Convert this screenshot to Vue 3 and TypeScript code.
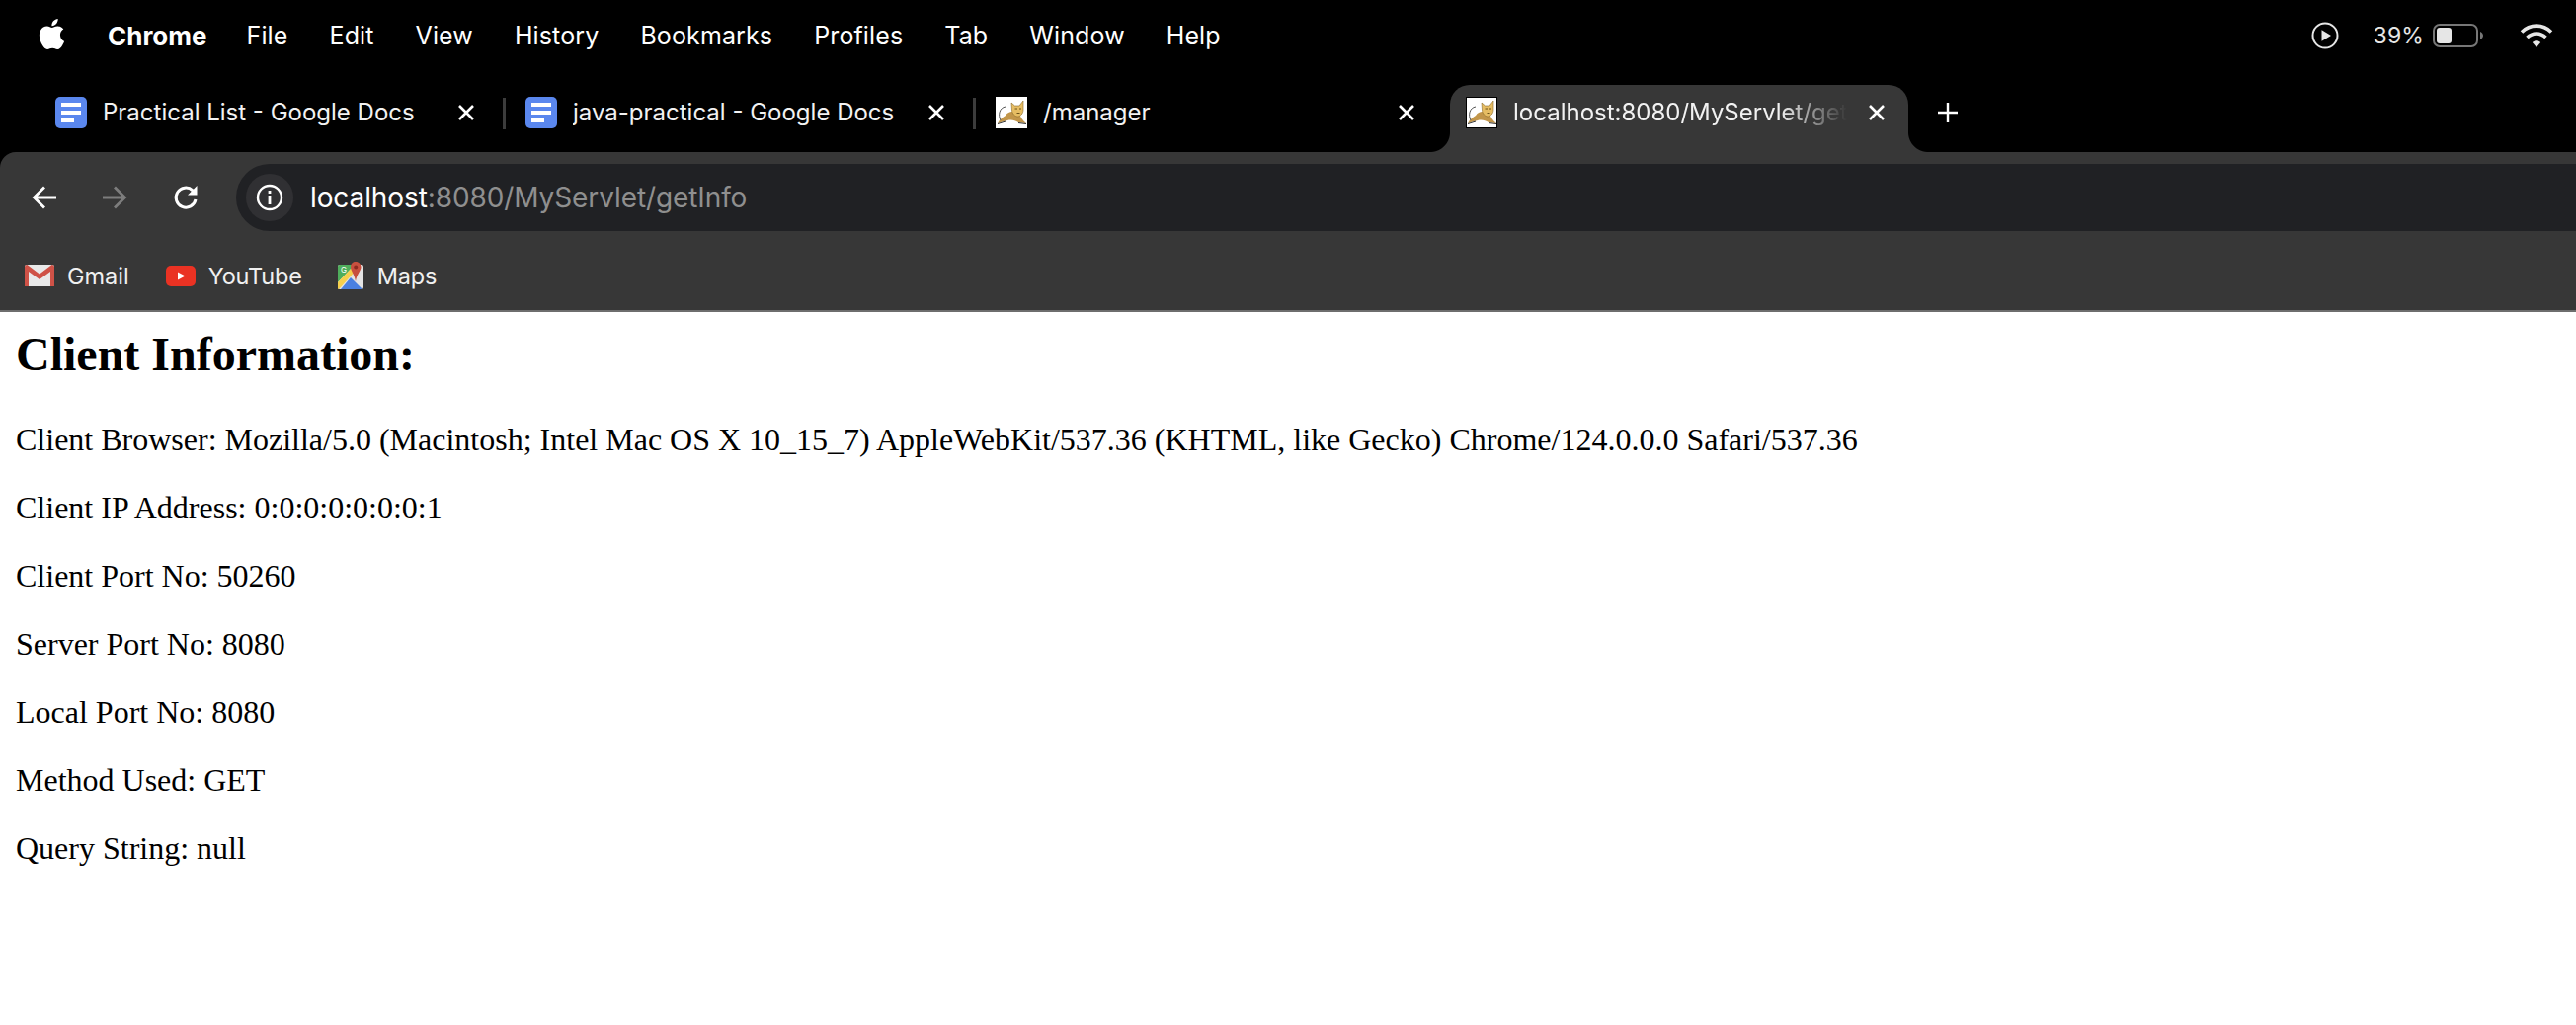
<script setup lang="ts">
const menus: string[] = ['File', 'Edit', 'View', 'History', 'Bookmarks', 'Profiles', 'Tab', 'Window', 'Help']
const lines: string[] = [
  'Client Browser: Mozilla/5.0 (Macintosh; Intel Mac OS X 10_15_7) AppleWebKit/537.36 (KHTML, like Gecko) Chrome/124.0.0.0 Safari/537.36',
  'Client IP Address: 0:0:0:0:0:0:0:1',
  'Client Port No: 50260',
  'Server Port No: 8080',
  'Local Port No: 8080',
  'Method Used: GET',
  'Query String: null',
]
interface Tab { title: string; icon: 'docs' | 'cat'; active?: boolean; sep?: boolean }
const tabs: Tab[] = [
  { title: 'Practical List - Google Docs', icon: 'docs', sep: true },
  { title: 'java-practical - Google Docs', icon: 'docs', sep: true },
  { title: '/manager', icon: 'cat' },
  { title: 'localhost:8080/MyServlet/getInfo', icon: 'cat', active: true },
]
</script>

<template>
  <div class="screen">
    <header class="chrome">
      <div class="menubar">
        <svg class="apple" viewBox="0 0 24 24" width="31" height="31" fill="#fff">
          <path d="M12.152 6.896c-.948 0-2.415-1.078-3.96-1.04-2.04.027-3.91 1.183-4.961 3.014-2.117 3.675-.546 9.103 1.519 12.09 1.013 1.454 2.208 3.09 3.792 3.039 1.52-.065 2.09-.987 3.935-.987 1.831 0 2.35.987 3.96.948 1.637-.026 2.676-1.48 3.676-2.948 1.156-1.688 1.636-3.325 1.662-3.415-.039-.013-3.182-1.221-3.22-4.857-.026-3.04 2.48-4.494 2.597-4.559-1.429-2.09-3.623-2.324-4.39-2.376-2-.156-3.675 1.09-4.61 1.09zM15.53 3.83c.843-1.012 1.4-2.427 1.245-3.83-1.207.052-2.662.805-3.532 1.818-.78.896-1.454 2.338-1.273 3.714 1.338.104 2.715-.688 3.559-1.701" />
        </svg>
        <span class="menu app">Chrome</span>
        <span v-for="m in menus" :key="m" class="menu">{{ m }}</span>
        <div class="status">
          <svg width="28" height="28" viewBox="0 0 28 28" fill="none">
            <circle cx="14" cy="14" r="12.5" stroke="#e6e6e6" stroke-width="2" />
            <path d="M10.5 8.2 L20 14 L10.5 19.8 Z" fill="#e6e6e6" />
          </svg>
          <span class="pct">39%</span>
          <svg class="battery" width="52" height="24" viewBox="0 0 52 24" fill="none">
            <rect x="1" y="1" width="44" height="22" rx="6" stroke="#777" stroke-width="2" />
            <rect x="4" y="4" width="15" height="16" rx="3" fill="#e6e6e6" />
            <path d="M48 8 C50 9 51 10.5 51 12 C51 13.5 50 15 48 16 Z" fill="#777" />
          </svg>
          <svg class="wifi" width="34" height="26" viewBox="0 0 34 26" fill="none" stroke="#e6e6e6" stroke-width="3.6">
            <path d="M2 9.5 C10.5 1 23.5 1 32 9.5" />
            <path d="M7.5 15 C13 9.6 21 9.6 26.5 15" />
            <path d="M12.8 20 L17 25 L21.2 20 C18.8 17.8 15.2 17.8 12.8 20 Z" fill="#e6e6e6" stroke="none" />
          </svg>
        </div>
      </div>

      <div class="tabstrip">
        <div v-for="t in tabs" :key="t.title" class="tab" :class="{ active: t.active, sep: t.sep }">
          <svg v-if="t.icon === 'docs'" class="favicon" width="32" height="32" viewBox="0 0 32 32">
            <rect width="32" height="32" rx="5" fill="#5a87ee" />
            <rect x="6" y="6" width="20" height="4" fill="#fff" />
            <rect x="6" y="14" width="20" height="4" fill="#fff" />
            <rect x="6" y="22" width="13" height="4" fill="#fff" />
          </svg>
          <svg v-else class="favicon" width="32" height="32" viewBox="0 0 32 32">
            <rect x="0.5" y="0.5" width="31" height="31" fill="#fff" :stroke="t.active ? '#000' : '#fff'" />
            <path d="M2 27 C4 23 7 21 10 19 C12 16 14 15 17 15 L24 17 C25 20 27 24 31 27 L23 26 C20 24 16 23 12 24 C8 25 5 26 2 27 Z" fill="#c2964a" />
            <path d="M16 6 L19.5 9 L24 9 L28 4 L28 13 C28 17 25 20 22.5 20 C19.5 20 16.5 17 16.5 13 Z" fill="#e6bd63" stroke="#8a6a2a" stroke-width="0.6" />
            <path d="M19.5 12 h2.5 M24 12 h2 M21.5 16.5 h3" stroke="#6b5018" stroke-width="1" />
            <path d="M5 24 C2 18 4 11 10 10" fill="none" stroke="#555" stroke-width="1" />
            <path d="M2 27.5 L10 25 M23 26.5 L31 27.5" stroke="#333" stroke-width="1" />
          </svg>
          <span class="title">{{ t.title }}</span>
          <svg class="close" width="18" height="18" viewBox="0 0 18 18" stroke="#fff" stroke-width="2.6">
            <path d="M2 2 L16 16 M16 2 L2 16" />
          </svg>
        </div>
        <svg class="plus" width="22" height="22" viewBox="0 0 22 22" stroke="#fff" stroke-width="2.4">
          <path d="M11 1 V21 M1 11 H21" />
        </svg>
      </div>

      <div class="toolbar">
        <div class="navrow">
          <svg class="nav" width="26" height="26" viewBox="0 0 26 26" fill="none" stroke="#fff" stroke-width="2.8">
            <path d="M25 13 H3 M13 2.5 L2.5 13 L13 23.5" />
          </svg>
          <svg class="nav dim" width="26" height="26" viewBox="0 0 26 26" fill="none" stroke="#7d7d7d" stroke-width="2.8">
            <path d="M1 13 H23 M13 2.5 L23.5 13 L13 23.5" />
          </svg>
          <svg class="nav" width="26" height="26" viewBox="0 0 26 26" fill="none" stroke="#fff" stroke-width="3">
            <path d="M23 15 A10 10 0 1 1 20 5.8 L23 8.5" />
            <path d="M24.5 1 V10.5 H15" fill="#fff" stroke="none" />
          </svg>
          <div class="omnibox">
            <span class="info">
              <svg width="28" height="28" viewBox="0 0 28 28" fill="none">
                <circle cx="14" cy="14" r="12" stroke="#fff" stroke-width="2.4" />
                <rect x="12.6" y="12" width="2.8" height="9" fill="#fff" />
                <rect x="12.6" y="7" width="2.8" height="3" fill="#fff" />
              </svg>
            </span>
            <span class="url"><span class="host">localhost</span>:8080/MyServlet/getInfo</span>
          </div>
        </div>
        <div class="bookmarks">
          <div class="bm gmail">
            <svg width="30" height="22" viewBox="0 0 30 22">
              <rect width="30" height="22" rx="2" fill="#e9e9e9" />
              <path d="M0 2 L0 22 L4 22 L4 7 L15 15 L26 7 L26 22 L30 22 L30 2 Q30 0 27.5 0 L15 9.5 L2.5 0 Q0 0 0 2 Z" fill="#cf5247" />
            </svg>
            <span>Gmail</span>
          </div>
          <div class="bm yt">
            <svg width="30" height="21" viewBox="0 0 30 21">
              <rect width="30" height="21" rx="5" fill="#ea3223" />
              <path d="M12 6.5 L19.5 10.5 L12 14.5 Z" fill="#fff" />
            </svg>
            <span>YouTube</span>
          </div>
          <div class="bm maps">
            <svg width="27" height="29" viewBox="0 0 27 29">
              <path d="M0 5 Q0 3 2 3 L24 3 Q26 3 26 5 L26 26 Q26 28 24 28 L2 28 Q0 28 0 26 Z" fill="#e4e4e4" />
              <path d="M0 5 Q0 3 2 3 L17 3 L0 21 Z" fill="#4fae5c" />
              <text x="3" y="11" font-size="8" font-family="Inter, sans-serif" fill="#fff">G</text>
              <path d="M0 21 L17 3 L19 8 L2 27 L0 28 Z" fill="#f6d04d" />
              <path d="M3 28 L13 16 L25 28 Z" fill="#4a80e0" />
              <path d="M18 0 C14.6 0 13 2.6 13 5.5 C13 9 17 13 18 20 C19 13 23.5 9 23.5 5.5 C23.5 2.6 21.5 0 18 0 Z" fill="#c8503f" />
              <circle cx="18.2" cy="5.6" r="2" fill="#8d2a20" />
            </svg>
            <span>Maps</span>
          </div>
        </div>
      </div>
    </header>

    <main class="page">
      <h2>Client Information:</h2>
      <p v-for="l in lines" :key="l">{{ l }}</p>
    </main>
  </div>
</template>

<style scoped>
.screen {
  width: 2608px;
  height: 1038px;
  overflow: hidden;
  background: #fff;
  display: flex;
  flex-direction: column;
}
.chrome {
  background: #000;
  color: #fff;
  font-family: Inter, "Liberation Sans", sans-serif;
}
.menubar {
  height: 72px;
  display: flex;
  align-items: center;
  padding-left: 37px;
  gap: 42px;
  font-size: 25px;
  letter-spacing: 0.12px;
}
.apple {
  margin-right: -1px;
  margin-top: -4px;
}
.menu.app {
  font-weight: 700;
  font-size: 26px;
  letter-spacing: 0;
  margin-right: -2px;
}
.status {
  margin-left: auto;
  display: flex;
  align-items: center;
  padding-right: 23px;
  color: #e6e6e6;
}
.pct {
  font-size: 23px;
  margin-left: 35px;
}
.battery {
  margin-left: 9px;
}
.wifi {
  margin-left: 36px;
}
.tabstrip {
  height: 68px;
  margin-top: 14px;
  padding-left: 40px;
  display: flex;
  gap: 12px;
  align-items: stretch;
}
.tab {
  position: relative;
  width: 464px;
  box-sizing: border-box;
  padding: 12px 16px 0;
  display: flex;
  align-items: flex-start;
  font-size: 24px;
  border-radius: 20px 20px 0 0;
}
.tab.sep::after {
  content: "";
  position: absolute;
  right: -8px;
  top: 13px;
  width: 3px;
  height: 32px;
  background: #3c3c3c;
}
.tab.active {
  background: #373737;
}
.tab.active::before,
.tab.active::after {
  content: "";
  position: absolute;
  bottom: 0;
  width: 20px;
  height: 20px;
}
.tab.active::before {
  left: -20px;
  background: radial-gradient(circle at 0 0, #000 19.5px, #373737 20.5px);
}
.tab.active::after {
  right: -20px;
  background: radial-gradient(circle at 100% 0, #000 19.5px, #373737 20.5px);
}
.favicon {
  flex: none;
}
.title {
  flex: 1;
  margin-left: 16px;
  height: 32px;
  line-height: 32px;
  white-space: nowrap;
  overflow: hidden;
  min-width: 0;
  color: #f2f2f2;
}
.tab.active .title {
  -webkit-mask-image: linear-gradient(to right, #000 78%, transparent 98%);
  mask-image: linear-gradient(to right, #000 78%, transparent 98%);
}
.close {
  flex: none;
  margin: 7px 7px 0 14px;
}
.plus {
  margin: 17px 0 0 17px;
}
.toolbar {
  background: #373737;
  border-radius: 16px 0 0 0;
  border-bottom: 2px solid #6e6e6e;
}
.navrow {
  height: 80px;
  box-sizing: border-box;
  padding: 12px 0 0 32px;
  display: flex;
  align-items: center;
}
.nav {
  flex: none;
  margin-right: 45px;
}
.nav.dim {
  margin-right: 46px;
}
.omnibox {
  flex: 1;
  height: 68px;
  margin-left: -7px;
  padding-left: 10px;
  background: #202124;
  border-radius: 34px 0 0 34px;
  display: flex;
  align-items: center;
}
.info {
  width: 48px;
  height: 48px;
  border-radius: 50%;
  background: #303033;
  display: flex;
  align-items: center;
  justify-content: center;
}
.url {
  margin-left: 17px;
  font-size: 28px;
  letter-spacing: -0.1px;
  color: #8f8f8f;
}
.host {
  color: #fff;
}
.bookmarks {
  height: 80px;
  box-sizing: border-box;
  padding: 10px 0 0 25px;
  display: flex;
  align-items: center;
  font-size: 23.5px;
  letter-spacing: -0.2px;
  color: #f0f0f0;
}
.bm {
  display: flex;
  align-items: center;
  gap: 13px;
}
.bm.gmail {
  letter-spacing: 0;
}
.bm.yt {
  margin-left: 37px;
}
.bm.maps {
  margin-left: 36px;
}
.page {
  flex: 1;
  padding: 15px 16px 16px;
  color: #000;
  font-family: "Liberation Serif", "Times New Roman", serif;
  font-size: 32px;
}
h2 {
  font-size: 48px;
  font-weight: 700;
  margin: 0 0 41px;
}
p {
  margin: 0 0 32px;
}
</style>
